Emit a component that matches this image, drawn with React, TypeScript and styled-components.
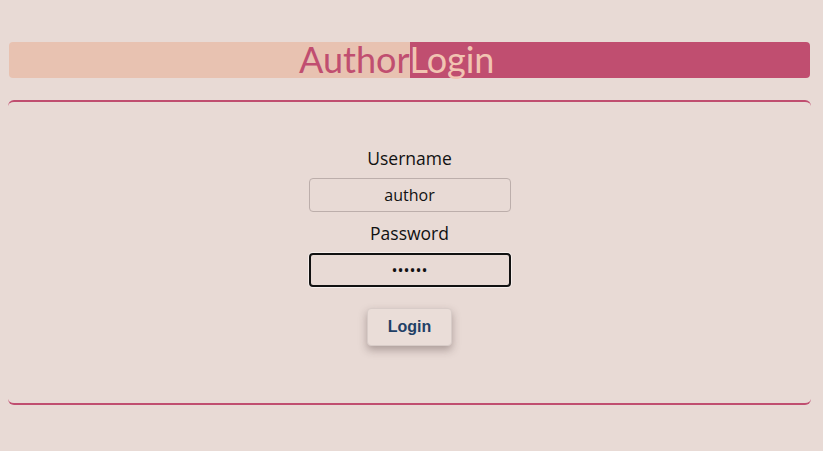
import React from "react";
import styled, { createGlobalStyle } from "styled-components";

const Global = createGlobalStyle`
  html, body { margin: 0; padding: 0; background: #e8dad5; }
  body { font-family: "Open Sans", "Liberation Sans", sans-serif; }
  * { box-sizing: border-box; }
`;

const Page = styled.div`
  width: 823px;
  height: 451px;
  padding: 42px 13px 0 9px;
  display: flex;
  flex-direction: column;
  gap: 22px;
`;

const Banner = styled.h1`
  margin: 0;
  height: 36px;
  display: grid;
  grid-template-columns: 1fr 1fr;
  font-family: "Lato", "Open Sans", sans-serif;
  font-weight: 400;
  font-size: 36px;
  line-height: 35px;
`;

const Half = styled.span<{ $side: "left" | "right" }>`
  display: block;
  height: 36px;
  text-align: ${(p) => (p.$side === "left" ? "right" : "left")};
  background: ${(p) => (p.$side === "left" ? "#e8c2b1" : "#c04e70")};
  color: ${(p) => (p.$side === "left" ? "#c04e70" : "#f1c4b2")};
  border-radius: ${(p) => (p.$side === "left" ? "4px 0 0 4px" : "0 4px 4px 0")};
`;

const Card = styled.section`
  margin: 0 -1px;
  height: 305px;
  border-top: 2px solid #c04e70;
  border-bottom: 2px solid #c04e70;
  border-radius: 6px;
  display: flex;
  flex-direction: column;
  align-items: center;
  padding-top: 44px;
`;

const Label = styled.label`
  font-family: "Open Sans", sans-serif;
  font-size: 17.5px;
  color: #111;
  line-height: 24px;
  margin-bottom: 8px;
`;

const Input = styled.input<{ $focused?: boolean }>`
  width: 202px;
  height: 34px;
  border-radius: 4px;
  background: #e8dad5;
  border: ${(p) => (p.$focused ? "2px solid #111" : "1px solid #bcaeab")};
  box-shadow: ${(p) => (p.$focused ? "0 0 0 1px #f6eeec" : "none")};
  text-align: center;
  font-family: "Open Sans", sans-serif;
  font-size: 16px;
  color: #111;
  margin-bottom: ${(p) => (p.$focused ? "21px" : "9px")};
  outline: none;
`;

const Button = styled.button`
  width: 85px;
  height: 38px;
  border: 1px solid #d8ccc8;
  border-radius: 4px;
  background: #eaddd8;
  box-shadow: 0 4px 8px rgba(60, 40, 40, 0.35);
  font-family: "Liberation Sans", Arial, sans-serif;
  font-weight: 700;
  font-size: 16px;
  color: #1f4066;
`;

export default function App() {
  return (
    <>
      <Global />
      <Page>
        <Banner>
          <Half $side="left">Author</Half>
          <Half $side="right">Login</Half>
        </Banner>
        <Card>
          <Label htmlFor="u">Username</Label>
          <Input id="u" defaultValue="author" />
          <Label htmlFor="p">Password</Label>
          <Input id="p" type="password" defaultValue="secret" $focused />
          <Button>Login</Button>
        </Card>
      </Page>
    </>
  );
}
